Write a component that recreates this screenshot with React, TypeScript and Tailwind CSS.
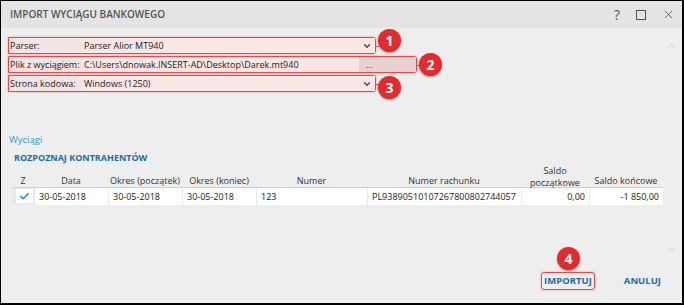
import { Check, ChevronDown, ChevronUp, X } from "lucide-react";

const Badge = ({ n, className }: { n: string; className: string }) => (
  <div
    className={`absolute flex h-[23px] w-[23px] items-center justify-center rounded-full bg-[#e32a2e] text-[14px] font-bold text-white shadow-[0_1px_2px_rgba(0,0,0,0.35)] ${className}`}
  >
    {n}
  </div>
);

const FormRow = ({
  label,
  value,
  kind,
}: {
  label: string;
  value: string;
  kind: "select" | "file";
}) => (
  <div
    className={`relative flex h-[17px] items-stretch rounded-r-[3px] border border-[#e9474a] bg-[#f2e4e4] shadow-[0_0_2px_rgba(233,71,74,0.55)] ${
      kind === "file" ? "w-[409px]" : "w-[368px]"
    }`}
  >
    <div className="flex w-[72px] shrink-0 items-center whitespace-nowrap pl-[1px] text-[#222]">{label}</div>
    <div className="flex w-[278px] items-center whitespace-nowrap bg-[#fbe6e6] pl-[3px] text-[#1a1a1a]">{value}</div>
    {kind === "select" ? (
      <div className="flex flex-1 items-center justify-center bg-[#fbe6e6]">
        <ChevronDown size={10} strokeWidth={3} className="text-[#444]" />
      </div>
    ) : (
      <div className="flex flex-1 items-center bg-[#e6d2d2] pl-[7px] text-[#444]">...</div>
    )}
    <div className="absolute right-[-4px] top-1/2 h-px w-[3px] bg-[#e9474a]" />
  </div>
);

const cols = "grid grid-cols-[22px_74px_74px_74px_111px_154px_68px_74px]";

export default function App() {
  return (
    <div className="relative flex h-[305px] w-[684px] flex-col border-b-2 border-l border-r-2 border-t border-black bg-[#eeeeee] font-['Open_Sans',sans-serif] text-[9px]">
      {/* title bar */}
      <div className="flex h-[27px] shrink-0 items-center justify-between bg-[#e4e4e4] pl-[9px] pr-[7px]">
        <span className="text-[10px] font-semibold text-[#555]">IMPORT WYCIĄGU BANKOWEGO</span>
        <div className="flex items-center gap-[16px] text-[#555]">
          <span className="text-[14px] leading-none">?</span>
          <div className="h-[10px] w-[10px] border-[1.5px] border-[#555]" />
          <X size={13} strokeWidth={1.6} />
        </div>
      </div>

      {/* form */}
      <div className="mt-[9px] flex flex-col gap-[2px] pl-[7px]">
        <FormRow label="Parser:" value="Parser Alior MT940" kind="select" />
        <FormRow
          label="Plik z wyciągiem:"
          value="C:\Users\dnowak.INSERT-AD\Desktop\Darek.mt940"
          kind="file"
        />
        <FormRow label="Strona kodowa:" value="Windows (1250)" kind="select" />
      </div>

      <div className="mt-[41px] pl-[8px] text-[9.5px] text-[#3a9ad6]">Wyciągi</div>
      <div className="mt-[4px] pl-[13px] text-[9px] font-bold text-[#1f6ca9]">
        ROZPOZNAJ KONTRAHENTÓW
      </div>

      {/* table */}
      <div className="ml-[11px] w-[651px]">
        <div className={`${cols} h-[22px] items-end pb-[5px] text-center leading-[11px] text-[#333]`}>
          <div>Z</div>
          <div>Data</div>
          <div>Okres (początek)</div>
          <div>Okres (koniec)</div>
          <div>Numer</div>
          <div>Numer rachunku</div>
          <div className="-mb-[4px] leading-[12.5px]">
            Saldo
            <br />
            początkowe
          </div>
          <div>Saldo końcowe</div>
        </div>
        <div className={`${cols} h-[18px] border-t border-[#d0d0d0] bg-[#e9e9e9] text-[#222]`}>
          <div className="flex items-center justify-end pr-[1px]">
            <div className="flex h-[14px] w-[17px] items-center justify-center bg-white">
              <Check size={11} strokeWidth={3.5} className="text-[#1e88e5]" />
            </div>
          </div>
          <div className="ml-[1px] flex items-center bg-white pl-[4px]">30-05-2018</div>
          <div className="ml-[1px] flex items-center bg-white pl-[4px]">30-05-2018</div>
          <div className="ml-[1px] flex items-center bg-white pl-[4px]">30-05-2018</div>
          <div className="ml-[1px] flex items-center bg-white pl-[4px]">123</div>
          <div className="ml-[1px] flex items-center bg-white pl-[4px]">PL93890510107267800802744057</div>
          <div className="ml-[1px] flex items-center justify-end bg-white pr-[4px]">0,00</div>
          <div className="ml-[1px] flex items-center justify-end bg-white pr-[4px]">-1 850,00</div>
        </div>
      </div>

      {/* footer */}
      <div className="mb-[13px] mt-auto flex items-center justify-end gap-[29px] pr-[21px] text-[9.5px] font-bold text-[#1f6ca9]">
        <div className="rounded-[3px] border border-[#e9474a] px-[2px] py-[1px] shadow-[0_0_2px_rgba(233,71,74,0.55)]">
          IMPORTUJ
        </div>
        <div>ANULUJ</div>
      </div>

      {/* scroll arrows */}
      <ChevronUp size={11} strokeWidth={1.5} className="absolute left-[665px] top-[39px] text-[#bdbdbd]" />
      <ChevronDown size={11} strokeWidth={1.5} className="absolute left-[665px] top-[243px] text-[#bdbdbd]" />

      {/* numbered callouts */}
      <Badge n="1" className="left-[377px] top-[28px]" />
      <Badge n="2" className="left-[418px] top-[52px]" />
      <Badge n="3" className="left-[377px] top-[75px]" />
      <Badge n="4" className="left-[556px] top-[246px]" />
    </div>
  );
}
